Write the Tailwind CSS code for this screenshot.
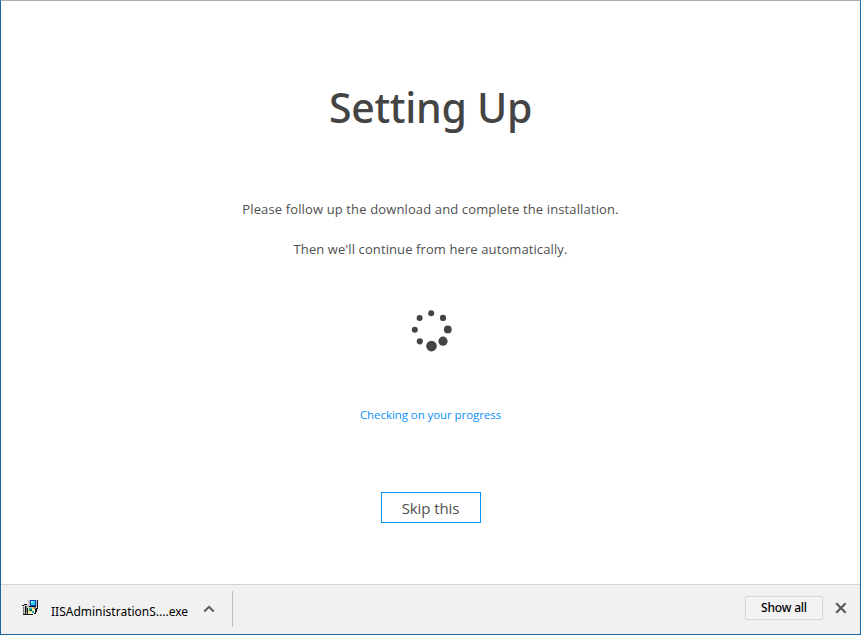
<!DOCTYPE html>
<html lang="en">
<head>
<meta charset="utf-8">
<title>Setting Up</title>
<script src="https://cdn.jsdelivr.net/npm/@tailwindcss/browser@4"></script>
</head>
<body class="h-[635px] w-[861px] overflow-hidden bg-white font-['Open_Sans','Noto_Sans',sans-serif]">
<div class="flex h-full flex-col border border-[#1767a3] border-t-[#adadad]">
  <main class="flex flex-1 flex-col items-center text-[#505050]">
    <h1 class="mt-[76px] h-[60px] whitespace-nowrap font-['Noto_Sans',sans-serif] text-[41px] leading-[60px] font-medium tracking-[-0.3px] text-[#444]">Setting Up</h1>
    <p class="mt-[62px] h-[20px] whitespace-nowrap text-[13px] leading-[20px] tracking-[0.13px]">Please follow up the download and complete the installation.</p>
    <p class="mt-[20px] h-[20px] whitespace-nowrap text-[13px] leading-[20px] tracking-[0.1px]">Then we'll continue from here automatically.</p>
    <svg class="mt-[49px] h-[44px] w-[44px] shrink-0" viewBox="409 308 44 44" fill="#444">
      <circle cx="431.2" cy="313.2" r="3"/><circle cx="443" cy="317.9" r="3.1"/><circle cx="447.8" cy="329.4" r="3.9"/><circle cx="443" cy="341.2" r="4.6"/><circle cx="431.5" cy="346.1" r="5.3"/><circle cx="419.8" cy="341.3" r="3.1"/><circle cx="414.8" cy="329.7" r="3"/><circle cx="419.6" cy="318" r="3"/>
    </svg>
    <p class="mt-[53px] h-[20px] whitespace-nowrap text-[11.5px] leading-[20px] tracking-[-0.07px] text-[#0b91f7]">Checking on your progress</p>
    <button class="mt-[67px] flex h-[31px] w-[100px] items-center justify-center border border-[#0b91f7] text-[15px] leading-[20px] tracking-[-0.1px]"><span class="whitespace-nowrap">Skip this</span></button>
  </main>
  <footer class="flex h-[50px] shrink-0 items-start border-t border-[#d3d3d3] bg-[#f1f1f1] pl-[21px] text-black">
    <svg class="mt-[14px] h-[18px] w-[18px] shrink-0" viewBox="22 599 18 18" shape-rendering="crispEdges">
      <path fill="#c4c4c4" d="M28 600h10v8h-10zM23 605h5v10h-5z"/>
      <path fill="#063fbd" d="M30 600h6v6h-6z"/><path fill="#28d7f5" d="M31 601h4v4h-4z"/><path fill="#b7fbff" d="M31 601h2v1h-1v1h-1z"/>
      <path fill="#111" d="M37 600h1v9h-2v-1h1zM29 606h7v1h-7zM22 605h2v1h-2zM24 604h3v1h-3zM25 606h1v8h-1zM23 614h10v1h-10zM27 608h1v6h-1zM35 609h2v3h-1v2h-2v-1h1z"/>
      <path fill="#777" d="M23 607h1v7h-1zM26 606h1v6h-1zM34 607h2v2h-2z"/>
      <path fill="#e9e9ba" d="M28 608h6v6h-6z"/><path fill="#13a9ae" d="M29 608h3v2h-1v1h-2zM32 611h2v2h-2z"/><path fill="#ffe45b" d="M32 608h2v2h-2zM28 611h2v2h-2z"/><path fill="#222" d="M30 610h2v1h-2z"/><path fill="#fff" d="M28 613h3v1h-3zM36 607h1v1h-1z"/>
    </svg>
    <span class="mt-[17px] ml-[11px] w-[138px] whitespace-nowrap font-['Noto_Sans',sans-serif] text-[12px] leading-[20px]">IISAdministrationS....exe</span>
    <svg class="mt-[18px] ml-[13px] h-[12px] w-[14px] shrink-0" viewBox="202 603 14 12" fill="none" stroke="#5a5a5a" stroke-width="2"><path d="M204.3 611.5l4.7-4.7 4.7 4.7"/></svg>
    <span class="mt-[6px] ml-[16px] h-[36px] w-px bg-[#bebebe]"></span>
    <button class="mt-[11px] ml-auto flex h-[24px] w-[78px] items-center justify-center rounded-[2px] border border-[#d5d5d5] bg-[#f3f3f3] font-['Noto_Sans',sans-serif] text-[12px] font-medium leading-[20px] tracking-[-0.2px]"><span class="whitespace-nowrap">Show all</span></button>
    <svg class="mt-[16px] mr-[12px] ml-[11px] h-[14px] w-[14px] shrink-0" viewBox="834 601 14 14" stroke="#5a5a5a" stroke-width="2.2"><path d="M836.2 603.3l9.4 9.4M845.6 603.3l-9.4 9.4"/></svg>
  </footer>
</div>
</body>
</html>
